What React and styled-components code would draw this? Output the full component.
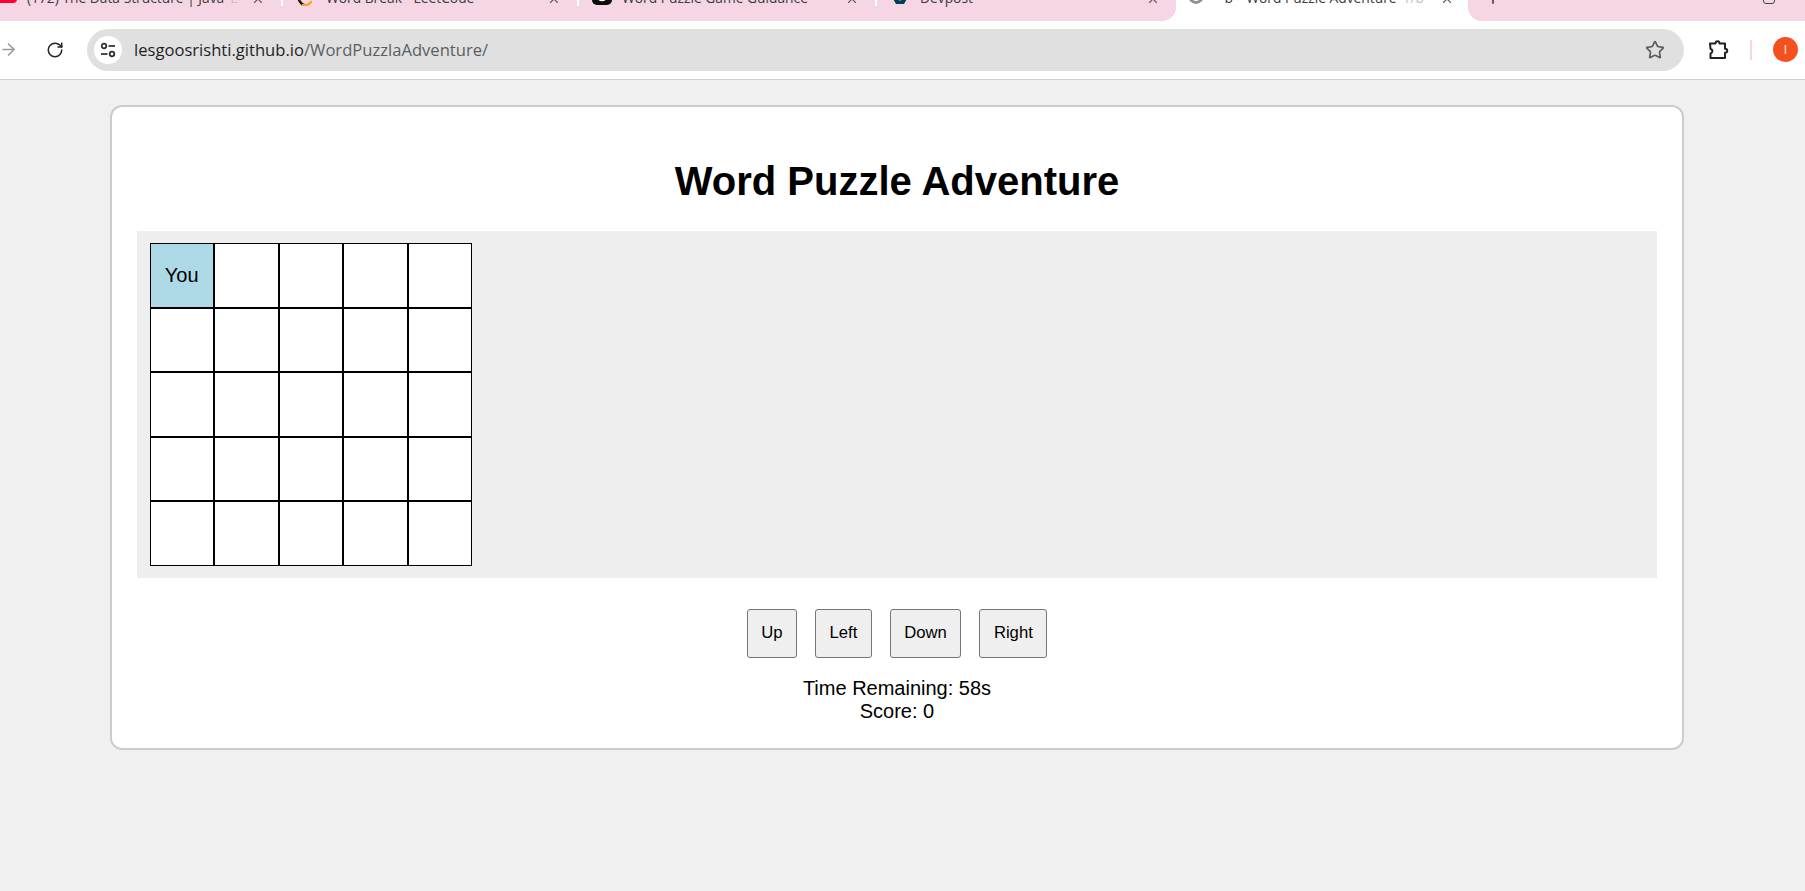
// Word Puzzle Adventure page inside a cropped browser window
import React from 'react';
import styled, { createGlobalStyle } from 'styled-components';
import { ArrowRight, RotateCw, Star, X, Plus } from 'lucide-react';

const GlobalStyle = createGlobalStyle`
    html, body {
        margin: 0;
        padding: 0;
        height: 100%;
        background: #f0f0f0;
    }
    body {
        font-family: "Liberation Sans", Arial, sans-serif;
        overflow: hidden;
    }
`;

// Browser chrome
const TabStrip = styled.div`
    display: flex;
    height: 21px;
    overflow: hidden;
    background: #ffffff;
    font-family: "Open Sans", "Noto Sans", sans-serif;
`;

const TabGroup = styled.div`
    display: flex;
    flex: ${props => (props.$grow ? '1' : 'none')};
    height: 21px;
    background: #f6d5e5;
    border-radius: ${props => (props.$grow ? '0 0 0 14px' : '0 0 14px 0')};
`;

const Tab = styled.div`
    display: flex;
    align-items: flex-end;
    width: ${props => props.$width}px;
    height: 21px;
    flex: none;
    background: ${props => (props.$active ? '#ffffff' : 'transparent')};
`;

const TabDivider = styled.div`
    width: 2px;
    height: 6px;
    flex: none;
    background: #ffffff;
`;

const IconSlot = styled.div`
    display: flex;
    align-items: flex-end;
    box-sizing: border-box;
    flex: none;
    width: ${props => props.$width}px;
    padding-left: ${props => props.$pad}px;
    margin-bottom: ${props => props.$lift}px;
`;

const TabTitle = styled.div`
    flex: 1;
    min-width: 0;
    margin-bottom: 13px;
    font-size: 13.8px;
    line-height: 20px;
    white-space: nowrap;
    color: #3c3c3c;
`;

const TabPrefix = styled.span`
    margin-right: 9px;
`;

const FadedText = styled.span`
    margin-left: 6px;
    color: #c4c0c2;
`;

const CloseMark = styled(X)`
    flex: none;
    width: 14px;
    height: 14px;
    margin: 0 ${props => props.$right}px 15px 0;
    color: #5f5f5f;
`;

const PlusMark = styled(Plus)`
    flex: none;
    width: 18px;
    height: 18px;
    margin: -11px 0 0 16px;
    color: #333333;
`;

const WindowMark = styled.div`
    width: 10px;
    height: 10px;
    margin: -8px 0 0 auto;
    margin-right: 30px;
    border: 1.5px solid #444444;
    border-radius: 3px;
`;

const Toolbar = styled.div`
    display: flex;
    align-items: center;
    box-sizing: border-box;
    height: 59px;
    padding-bottom: 1px;
    background: #ffffff;
    border-bottom: 1px solid #cfcfcf;
`;

const ForwardIcon = styled(ArrowRight)`
    width: 19px;
    height: 19px;
    margin-left: -1px;
    color: #9a9a9a;
`;

const ReloadIcon = styled(RotateCw)`
    width: 18px;
    height: 18px;
    margin-left: 28px;
    color: #222222;
`;

const Omnibox = styled.div`
    display: flex;
    align-items: center;
    box-sizing: border-box;
    width: 1597px;
    height: 42px;
    margin-left: 23px;
    padding: 0 19px 0 7px;
    border-radius: 21px;
    background: #e0e0e0;
    font-family: "Open Sans", "Noto Sans", sans-serif;
    font-size: 16.6px;
`;

const TuneButton = styled.div`
    display: flex;
    align-items: center;
    justify-content: center;
    width: 28px;
    height: 28px;
    border-radius: 50%;
    background: #ffffff;
`;

const Url = styled.div`
    flex: 1;
    margin-left: 12px;
    color: #1f1f1f;
    white-space: nowrap;
`;

const UrlPath = styled.span`
    color: #5a5e63;
`;

const StarIcon = styled(Star)`
    width: 20px;
    height: 20px;
    color: #5c5c5c;
`;

const PuzzleButton = styled.svg`
    width: 24px;
    height: 24px;
    margin-left: 22px;
    flex: none;
`;

const ToolbarDivider = styled.div`
    width: 2px;
    height: 20px;
    margin-left: 20px;
    background: #f6d5e5;
`;

const Avatar = styled.div`
    display: flex;
    align-items: center;
    justify-content: center;
    width: 25px;
    height: 25px;
    margin-left: 21px;
    border-radius: 50%;
    background: #f4511e;
    color: #ffffff;
    font-family: "Open Sans", sans-serif;
    font-size: 12px;
    flex: none;
`;

// Game page
const Card = styled.main`
    box-sizing: border-box;
    width: 1574px;
    height: 645px;
    margin: 25px 0 0 110px;
    padding: 25px 25px;
    background: #ffffff;
    border: 2px solid #cccccc;
    border-radius: 12px;
`;

const Title = styled.h1`
    margin: 28px 0 29px;
    font-size: 40px;
    line-height: 42px;
    font-weight: 700;
    text-align: center;
    color: #000000;
`;

const GameArea = styled.div`
    padding: 12px 13px;
    background: #eeeeee;
`;

const Grid = styled.div`
    display: grid;
    grid-template-columns: repeat(5, 64.4px);
    grid-auto-rows: 64.6px;
    width: 322px;
`;

const Cell = styled.div`
    display: flex;
    align-items: center;
    justify-content: center;
    box-sizing: border-box;
    padding-right: 1px;
    border: 1px solid #000000;
    background: ${props => (props.$player ? '#add8e6' : '#ffffff')};
    font-size: 20px;
    color: #000000;
`;

const Controls = styled.div`
    display: flex;
    justify-content: center;
    gap: 18px;
    margin-top: 31px;
`;

const MoveButton = styled.button`
    box-sizing: border-box;
    height: 49px;
    padding: 0 13.5px;
    background: #efefef;
    border: 1px solid #767676;
    border-radius: 3px;
    font-family: "Liberation Sans", Arial, sans-serif;
    font-size: 16.67px;
    color: #000000;
`;

const Status = styled.div`
    margin-top: 19px;
    font-size: 20px;
    line-height: 23px;
    text-align: center;
    color: #000000;
`;

const TuneIcon = () => (
    <svg width="18" height="18" viewBox="0 0 18 18" fill="none" stroke="#2a2a2a" strokeWidth="1.7">
        <circle cx="5" cy="5" r="2.3" />
        <path d="M9.5 5H16" />
        <path d="M2 13H8.5" />
        <circle cx="13" cy="13" r="2.3" />
    </svg>
);

const YoutubeIcon = () => (
    <svg width="17" height="14" viewBox="0 0 17 14"><rect x="-4" width="21" height="14" rx="4" fill="#ff0033" /></svg>
);

const LeetcodeIcon = () => (
    <svg width="16" height="16" viewBox="0 0 16 16" fill="none" strokeWidth="2.4" strokeLinecap="round">
        <path d="M1 5c0 5 3 9 6 10" stroke="#1a1a1a" />
        <path d="M6 15c3 1 6-.5 8-3" stroke="#f5a623" />
    </svg>
);

const ChatIcon = () => (
    <svg width="20" height="20" viewBox="0 0 20 20" fill="none">
        <rect width="20" height="20" rx="5" fill="#0d0d0d" />
        <circle cx="10" cy="10" r="5.5" stroke="#ffffff" strokeWidth="1.4" />
        <circle cx="10" cy="10" r="2.5" stroke="#ffffff" strokeWidth="1" />
    </svg>
);

const DevpostIcon = () => (
    <svg width="16" height="16" viewBox="0 0 16 16">
        <path d="M4 1h8l4 7-4 7H4L0 8z" fill="#003e54" />
        <circle cx="8" cy="8" r="3.4" fill="#f6d5e5" />
    </svg>
);

const GlobeIcon = () => (
    <svg width="16" height="16" viewBox="0 0 16 16" fill="none">
        <circle cx="8" cy="8" r="6.4" stroke="#8f9296" strokeWidth="3" />
    </svg>
);

const tabs = [
    { width: 281, slot: 27, pad: 0, lift: 18, icon: <YoutubeIcon />, title: '(172) The Data Structure | Java', faded: 'E' },
    { width: 294, slot: 43, pad: 14, lift: 15, icon: <LeetcodeIcon />, title: 'Word Break - LeetCode' },
    { width: 296, slot: 43, pad: 13, lift: 16, icon: <ChatIcon />, title: 'Word Puzzle Game Guidance' },
    { width: 299, slot: 43, pad: 15, lift: 16, icon: <DevpostIcon />, title: 'Devpost' },
];

const cells = Array.from({ length: 25 }, (_, i) => i);

function App() {
    return (
        <>
            <GlobalStyle />
            <TabStrip>
                <TabGroup>
                    {tabs.map((tab, i) => (
                        <React.Fragment key={tab.title}>
                            {i > 0 && <TabDivider />}
                            <Tab $width={tab.width}>
                                <IconSlot $width={tab.slot} $pad={tab.pad} $lift={tab.lift}>{tab.icon}</IconSlot>
                                <TabTitle>{tab.title}{tab.faded && <FadedText>{tab.faded}</FadedText>}</TabTitle>
                                <CloseMark $right={16} />
                            </Tab>
                        </React.Fragment>
                    ))}
                </TabGroup>
                <Tab $width={292} $active>
                    <IconSlot $width={44} $pad={12} $lift={17}><GlobeIcon /></IconSlot>
                    <TabTitle><TabPrefix>-b-</TabPrefix>Word Puzzle Adventure<FadedText>1/b</FadedText></TabTitle>
                    <CloseMark $right={14} />
                </Tab>
                <TabGroup $grow>
                    <PlusMark />
                    <WindowMark />
                </TabGroup>
            </TabStrip>

            <Toolbar>
                <ForwardIcon />
                <ReloadIcon />
                <Omnibox>
                    <TuneButton><TuneIcon /></TuneButton>
                    <Url>lesgoosrishti.github.io<UrlPath>/WordPuzzlaAdventure/</UrlPath></Url>
                    <StarIcon />
                </Omnibox>
                <PuzzleButton viewBox="0 0 24 24" fill="none" stroke="#222222" strokeWidth="2" strokeLinejoin="round">
                    <path d="M4 5.500h5.500c0-3 4-3 4 0H19v5.200c3 0 3 4 0 4V20H4.500v-4.500c2.500-.5 2.500-4 0-4.500z" />
                </PuzzleButton>
                <ToolbarDivider />
                <Avatar>I</Avatar>
            </Toolbar>

            <Card>
                <Title>Word Puzzle Adventure</Title>
                <GameArea>
                    <Grid>
                        {cells.map(i => (
                            <Cell key={i} $player={i === 0}>{i === 0 ? 'You' : ''}</Cell>
                        ))}
                    </Grid>
                </GameArea>
                <Controls>
                    <MoveButton>Up</MoveButton>
                    <MoveButton>Left</MoveButton>
                    <MoveButton>Down</MoveButton>
                    <MoveButton>Right</MoveButton>
                </Controls>
                <Status>
                    <div>Time Remaining: 58s</div>
                    <div>Score: 0</div>
                </Status>
            </Card>
        </>
    );
}

export default App;
